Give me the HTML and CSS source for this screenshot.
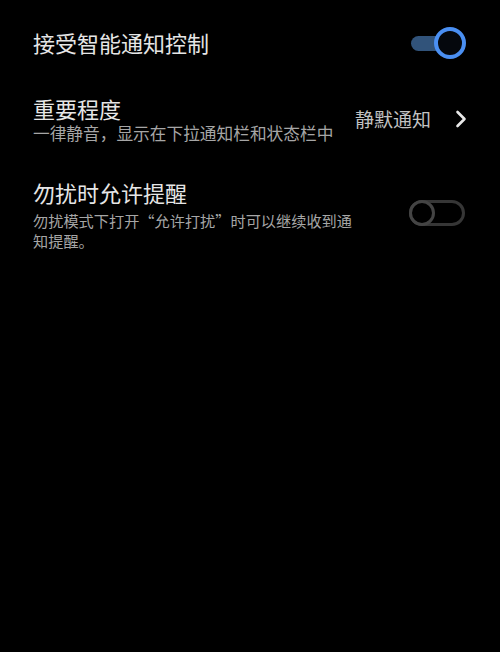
FILE: index.html
```html
<!DOCTYPE html>
<html lang="zh-CN">
<head>
<meta charset="utf-8">
<link rel="stylesheet" href="styles.css">
</head>
<body>
<div class="list">
  <div class="row row-top">
    <div class="text">
      <div class="title">接受智能通知控制</div>
    </div>
    <div class="switch-on">
      <span class="track"></span>
      <span class="knob"></span>
    </div>
  </div>
  <div class="row row-mid">
    <div class="text">
      <div class="title">重要程度</div>
      <div class="sub sub-a">一律静音，显示在下拉通知栏和状态栏中</div>
    </div>
    <div class="value">
      <span class="value-text">静默通知</span>
      <svg class="chev" width="12" height="18" viewBox="0 0 12 18"><path d="M2.5 2 L9.5 9 L2.5 16" fill="none" stroke="#e8e8e8" stroke-width="2.6" stroke-linecap="round" stroke-linejoin="round"/></svg>
    </div>
  </div>
  <div class="row row-bot">
    <div class="text narrow">
      <div class="title">勿扰时允许提醒</div>
      <div class="sub sub-b">勿扰模式下打开“允许打扰”时可以继续收到通知提醒。</div>
    </div>
    <div class="switch-off">
      <span class="knob-off"></span>
    </div>
  </div>
</div>
</body>
</html>
```

FILE: styles.css
```css
html, body {
  margin: 0;
  padding: 0;
  background: #000;
}
body {
  width: 500px;
  height: 652px;
  font-family: "Noto Sans CJK SC", "Noto Sans", sans-serif;
  color: #e6e6e6;
}
.list {
  padding-top: 12px;
}
.row {
  display: flex;
  align-items: center;
  justify-content: space-between;
  padding: 0 34px 0 33px;
}
.row-top {
  height: 60px;
}
.row-mid {
  padding-top: 22px;
  padding-bottom: 17px;
}
.row-bot {
  padding-top: 17px;
}
.text {
  display: flex;
  flex-direction: column;
}
.narrow {
  width: 325px;
}
.title {
  font-size: 22px;
  line-height: 28px;
  color: #e6e6e6;
}
.sub {
  color: #a6a6a6;
}
.sub-a {
  font-size: 16.7px;
  line-height: 22px;
  white-space: nowrap;
}
.sub-b {
  font-size: 15.2px;
  line-height: 20px;
  margin-top: 4px;
}
.value {
  display: flex;
  align-items: center;
  margin-right: -1px;
}
.value-text {
  font-size: 19px;
  line-height: 24px;
  color: #c2c2c2;
  margin-right: 24px;
}
.chev {
  display: block;
}
.switch-on {
  position: relative;
  width: 55px;
  height: 32px;
  margin-top: 2px;
}
.track {
  position: absolute;
  left: 0;
  top: 9px;
  width: 40px;
  height: 15px;
  border-radius: 8px;
  background: #31537a;
}
.knob {
  position: absolute;
  right: 0;
  top: 0;
  width: 24px;
  height: 24px;
  border: 4px solid #4a8ff2;
  border-radius: 50%;
  background: #05080d;
}
.switch-off {
  position: relative;
  width: 50px;
  height: 20px;
  border: 3px solid #363636;
  border-radius: 14px;
  margin-top: -3px;
  margin-right: 1px;
}
.knob-off {
  position: absolute;
  left: -3px;
  top: -3px;
  width: 20px;
  height: 20px;
  border: 3px solid #444;
  border-radius: 50%;
  background: #000;
}
```
